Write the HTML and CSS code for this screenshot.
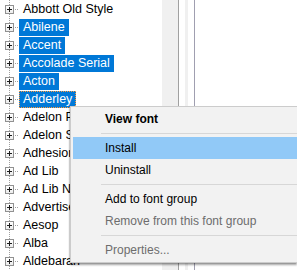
FILE: index.html
```html
<!DOCTYPE html>
<html>
<head>
	<title>Fonts</title>
	<link rel="stylesheet" href="styles.css">
</head>
<body>
	<div class="window">
		<div class="tree">
			<div class="node"><span class="expander"></span><span class="branch"></span><span class="label">Abbott Old Style</span></div>
			<div class="node"><span class="expander"></span><span class="branch"></span><span class="label selected">Abilene</span></div>
			<div class="node"><span class="expander"></span><span class="branch"></span><span class="label selected">Accent</span></div>
			<div class="node"><span class="expander"></span><span class="branch"></span><span class="label selected">Accolade Serial</span></div>
			<div class="node"><span class="expander"></span><span class="branch"></span><span class="label selected">Acton</span></div>
			<div class="node"><span class="expander"></span><span class="branch"></span><span class="label selected focused">Adderley</span></div>
			<div class="node"><span class="expander"></span><span class="branch"></span><span class="label">Adelon Pro</span></div>
			<div class="node"><span class="expander"></span><span class="branch"></span><span class="label">Adelon Serial</span></div>
			<div class="node"><span class="expander"></span><span class="branch"></span><span class="label">Adhesion</span></div>
			<div class="node"><span class="expander"></span><span class="branch"></span><span class="label">Ad Lib</span></div>
			<div class="node"><span class="expander"></span><span class="branch"></span><span class="label">Ad Lib Normal</span></div>
			<div class="node"><span class="expander"></span><span class="branch"></span><span class="label">Advertisement</span></div>
			<div class="node"><span class="expander"></span><span class="branch"></span><span class="label">Aesop</span></div>
			<div class="node"><span class="expander"></span><span class="branch"></span><span class="label">Alba</span></div>
			<div class="node"><span class="expander"></span><span class="branch"></span><span class="label">Aldebaran</span></div>
		</div>
		<div class="track"></div>
		<div class="splitter"><div class="grip"></div></div>
		<div class="pane"></div>
	</div>

	<div class="menu">
		<div class="item bold">View font</div>
		<div class="sep"></div>
		<div class="item hover">Install</div>
		<div class="item">Uninstall</div>
		<div class="sep"></div>
		<div class="item">Add to font group</div>
		<div class="item disabled">Remove from this font group</div>
		<div class="sep"></div>
		<div class="item disabled">Properties...</div>
	</div>
</body>
</html>
```

FILE: styles.css
```css
body {
	margin: 0;
	width: 297px;
	height: 270px;
	overflow: hidden;
	background-color: #fff;
	font-family: 'Liberation Sans', Arial, sans-serif;
	font-size: 12px;
	position: relative;
}

.window {
	display: flex;
	height: 270px;
}

.tree {
	width: 162px;
	overflow: hidden;
	background: repeating-linear-gradient(to bottom, #a0a0a0 0 1px, transparent 1px 2px) no-repeat 9px 0 / 1px 100%;
}

.node {
	display: flex;
	align-items: center;
	height: 18px;
	white-space: nowrap;
}

.expander {
	flex: none;
	width: 9px;
	height: 9px;
	margin-left: 5px;
	box-sizing: border-box;
	border: 1px solid #919191;
	background: linear-gradient(#ffffff, #ececec);
	position: relative;
}

.expander::before,
.expander::after {
	content: '';
	position: absolute;
	background-color: #1c1c1c;
}

.expander::before {
	left: 1px;
	top: 3px;
	width: 5px;
	height: 1px;
}

.expander::after {
	left: 3px;
	top: 1px;
	width: 1px;
	height: 5px;
}

.branch {
	flex: none;
	width: 4px;
	height: 1px;
	margin-left: 1px;
	background: repeating-linear-gradient(to right, #a0a0a0 0 1px, transparent 1px 2px);
}

.label {
	line-height: 17px;
	padding: 0 4px 0 4px;
	font-size: 12.5px;
	color: #000;
}

.label.selected {
	background-color: #0078d7;
	color: #fff;
}

.label.focused {
	outline: 1px dotted #ff9a3c;
	outline-offset: -1px;
}

.track {
	width: 16px;
	background-color: #f0f0f0;
	border-right: 1px solid #a0a0a0;
}

.splitter {
	width: 16px;
	display: flex;
	padding-left: 6px;
	box-sizing: border-box;
	border-right: 1px solid #a09fb0;
}

.grip {
	width: 3px;
	background-color: #f0f0f0;
}

.pane {
	flex: 1;
	background-color: #fff;
}

.menu {
	position: absolute;
	left: 70px;
	right: 0;
	top: 106px;
	padding: 1px 0 1px 0;
	font-size: 12px;
	background-color: #f2f2f2;
	border: 1px solid #cccccc;
	border-right: none;
	box-shadow: 0 2px 2px rgba(0, 0, 0, 0.35), -1px 1px 1px rgba(0, 0, 0, 0.1);
}

.item {
	height: 22px;
	line-height: 22px;
	margin-left: 2px;
	padding-left: 32px;
	color: #000;
	white-space: nowrap;
}

.item.bold {
	font-weight: bold;
}

.item.hover {
	background-color: #91c9f7;
}

.item.disabled {
	color: #6d6d6d;
}

.sep {
	height: 1px;
	margin: 3px 0 3px 30px;
	background-color: #d7d7d7;
}
```
